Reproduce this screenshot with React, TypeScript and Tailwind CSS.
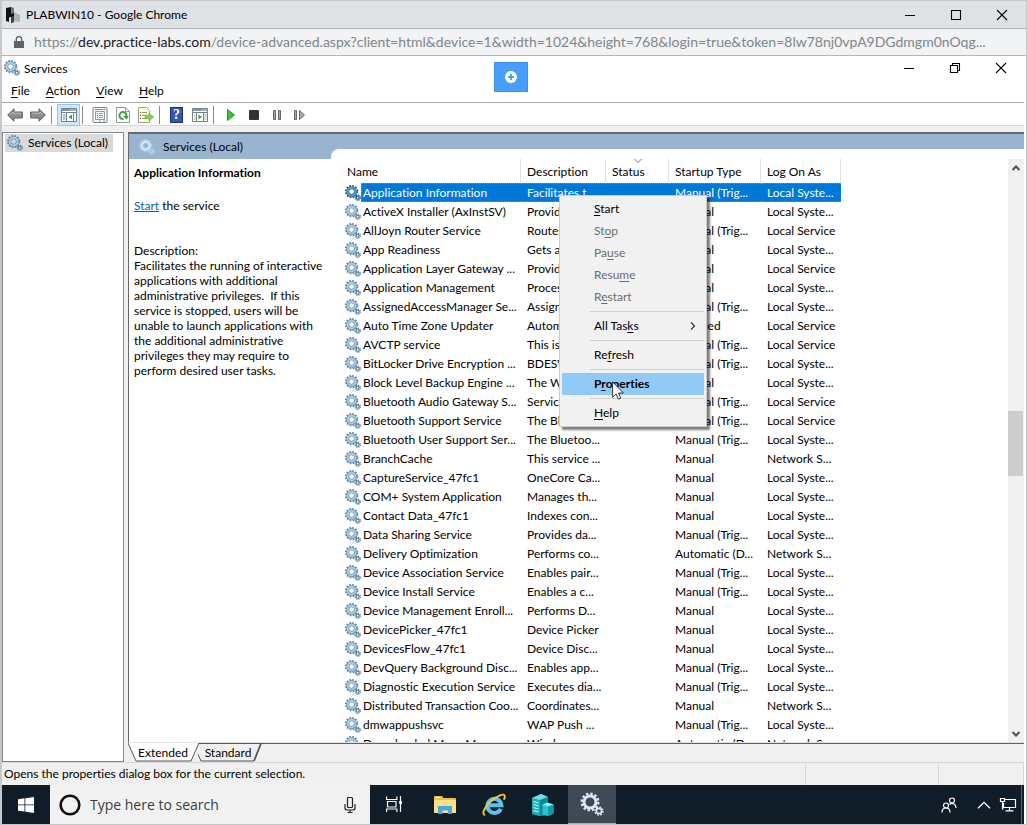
import React from "react";

type IconProps = { className?: string };

function Gears({ className = "", pale = false, strong = false }: IconProps & { pale?: boolean; strong?: boolean }) {
  const body = pale ? "#d3e6f3" : strong ? "#5f9cc8" : "#a9cbe3";
  const edge = pale ? "#b5d2e8" : strong ? "#1f5f96" : "#5f87a5";
  return (
    <svg viewBox="0 0 16 16" className={"h-4 w-4 shrink-0 " + className} aria-hidden="true">
      <circle cx="6.6" cy="6.6" r="5.800" fill="none" stroke={edge} strokeWidth="1.800" strokeDasharray="1.700 1.337" />
      <circle cx="6.6" cy="6.6" r="3.900" fill="none" stroke={edge} strokeWidth="3" />
      <circle cx="6.6" cy="6.6" r="3.900" fill="none" stroke={body} strokeWidth="2" />
      <circle cx="12.7" cy="12.7" r="2.600" fill="none" stroke={edge} strokeWidth="1.300" strokeDasharray="1.200 0.842" />
      <circle cx="12.7" cy="12.7" r="1.500" fill="none" stroke={edge} strokeWidth="1.300" />
    </svg>
  );
}

function Minimize() {
  return (
    <svg viewBox="0 0 12 12" className="h-3 w-3" stroke="#000" fill="none" aria-hidden="true">
      <path d="M1 6.500h10" />
    </svg>
  );
}

function Maximize() {
  return (
    <svg viewBox="0 0 12 12" className="h-3 w-3" stroke="#000" fill="none" aria-hidden="true">
      <path d="M1.500 1.500h9v9h-9z" strokeWidth="1.1" />
    </svg>
  );
}

function Restore() {
  return (
    <svg viewBox="0 0 12 12" className="h-3 w-3" stroke="#000" fill="none" aria-hidden="true">
      <path d="M1.500 3.500h7v7h-7zM3.500 3.500v-2h7v7h-2" strokeWidth="1.1" />
    </svg>
  );
}

function Close() {
  return (
    <svg viewBox="0 0 12 12" className="h-3 w-3" stroke="#000" fill="none" aria-hidden="true">
      <path d="M1 1l10 10M11 1L1 11" strokeWidth="1.1" />
    </svg>
  );
}

function WindowControls({ restore = false }: { restore?: boolean }) {
  const items: [string, React.ReactNode][] = [
    ["Minimize", <Minimize />],
    restore ? ["Restore", <Restore />] : ["Maximize", <Maximize />],
    ["Close", <Close />],
  ];
  return (
    <div className="flex">
      {items.map(([label, icon]) => (
        <button key={label} aria-label={label} className="flex h-6 w-[46px] items-center justify-center">
          {icon}
        </button>
      ))}
    </div>
  );
}

function ArrowIcon({ flip = false }: { flip?: boolean }) {
  return (
    <svg viewBox="0 0 16 14" className={flip ? "h-3.5 w-4 -scale-x-100" : "h-3.5 w-4"} aria-hidden="true">
      <path d="M0.700 7L7 .800v3.200h8.300v6H7v3.200z" fill="#8d8d8d" stroke="#5c5c5c" strokeLinejoin="round" />
      <path d="M2.800 6.800L6 3.800V5.200h8" stroke="#bdbdbd" fill="none" />
    </svg>
  );
}

function PaneIcon({ right = false }: { right?: boolean }) {
  return (
    <svg viewBox="0 0 16 14" className="h-3.5 w-4" aria-hidden="true">
      <path d="M.5.5h15v13H.5z" fill="#fff" stroke="#78828c" />
      <path d="M1 1h14v2H1z" fill="#8a949e" />
      <path d="M9.500 2h1M11.500 2h1M13.500 2h1" stroke="#fff" />
      <path d="M1 4.500h14" stroke="#78828c" />
      {right ? (
        <>
          <path d="M11.500 5v8M4.500 5v8" stroke="#78828c" />
          <path d="M6.500 6.500v5L10 9z" fill="#34a526" />
          <path d="M12.500 7h2M12.500 9h2M12.500 11h2M2 7h1.500M2 9h1.500M2 11h1.500" stroke="#8fa2b0" />
        </>
      ) : (
        <>
          <path d="M5.500 5v8M12.500 5v8" stroke="#78828c" />
          <path d="M11 6.500v5L7.500 9z" fill="#34a526" />
          <path d="M2 7h2.500M2 9h2.500M2 11h2.500" stroke="#5f8fb0" />
        </>
      )}
    </svg>
  );
}

function PropertiesIcon() {
  return (
    <svg viewBox="0 0 16 16" className="h-4 w-4" aria-hidden="true">
      <rect x="1" y=".5" width="14" height="15" rx="1" fill="#fdfdfd" stroke="#7d8287" />
      <path d="M3 2.500h8M12 2.500h1.500" stroke="#7d8287" />
      <path d="M3.500 4.500h9v8h-9z" fill="#f3f6f8" stroke="#8e989f" />
      <path d="M5 6.500h1M5 8.500h1M5 10.500h1" stroke="#4992c7" />
      <path d="M7 6.500h4M7 8.500h4M7 10.500h4" stroke="#9aa3aa" />
      <path d="M7 14h2M11 14h2" stroke="#8e989f" />
    </svg>
  );
}

function RefreshIcon() {
  return (
    <svg viewBox="0 0 14 16" className="h-4 w-3.5" aria-hidden="true">
      <path d="M.5.5h9l4 4v11H.5z" fill="#fdfdfd" stroke="#9b9b9b" />
      <path d="M9.500.5v4h4" fill="none" stroke="#9b9b9b" />
      <path d="M10.300 9.500A3.500 3.500 0 1 0 7.500 12" fill="none" stroke="#3fa544" strokeWidth="2" />
      <path d="M7.500 9h5.300L10.300 12.800z" fill="#2f9e33" />
    </svg>
  );
}

function ExportIcon() {
  return (
    <svg viewBox="0 0 16 16" className="h-4 w-4" aria-hidden="true">
      <path d="M.5.5h8l3 3v12H.5z" fill="#fffbe0" stroke="#a3a08c" />
      <path d="M4 5.500h5M4 8.500h3M4 11.500h5" stroke="#a19a77" />
      <path d="M2 5.500h1M2 8.500h1M2 11.500h1" stroke="#555" />
      <path d="M7 8.300h4V6l4.700 4L11 14v-2.300H7z" fill="#7fd44c" stroke="#4fa82c" strokeWidth=".5" />
    </svg>
  );
}

function HelpIcon() {
  return (
    <span className="flex h-4 w-[13px] items-center justify-center border border-[#1f3274] bg-[#3c55ad] font-['Liberation_Serif',serif] text-sm font-bold leading-none text-white">
      ?
    </span>
  );
}

function ToolButton({ label, active, children }: { label: string; active?: boolean; children: React.ReactNode }) {
  return (
    <button
      aria-label={label}
      className={
        active
          ? "flex h-[22px] w-[23px] items-center justify-center border border-[#92c8f0] bg-[#cce8ff]"
          : "flex h-[22px] w-[23px] items-center justify-center"
      }
    >
      {children}
    </button>
  );
}

function ToolSeparator() {
  return <span className="ml-0.5 mr-[5px] h-[18px] w-px bg-[#8c8c8c]" />;
}

type Service = [string, string, string, string];

const T = "Manual (Trig...";
const M = "Manual";
const SY = "Local Syste...";
const SE = "Local Service";
const NS = "Network S...";

const services: Service[] = [
  ["Application Information", "Facilitates t...", T, SY],
  ["ActiveX Installer (AxInstSV)", "Provides Us...", M, SY],
  ["AllJoyn Router Service", "Routes AllJo...", T, SE],
  ["App Readiness", "Gets apps re...", M, SY],
  ["Application Layer Gateway ...", "Provides sup...", M, SE],
  ["Application Management", "Processes in...", M, SY],
  ["AssignedAccessManager Se...", "AssignedAcc...", T, SY],
  ["Auto Time Zone Updater", "Automaticall...", "Disabled", SE],
  ["AVCTP service", "This is Audio...", T, SE],
  ["BitLocker Drive Encryption ...", "BDESVC hos...", T, SY],
  ["Block Level Backup Engine ...", "The WBENG...", M, SY],
  ["Bluetooth Audio Gateway S...", "Service supp...", T, SE],
  ["Bluetooth Support Service", "The Bluetoo...", T, SE],
  ["Bluetooth User Support Ser...", "The Bluetoo...", T, SY],
  ["BranchCache", "This service ...", M, NS],
  ["CaptureService_47fc1", "OneCore Ca...", M, SY],
  ["COM+ System Application", "Manages th...", M, SY],
  ["Contact Data_47fc1", "Indexes con...", M, SY],
  ["Data Sharing Service", "Provides da...", T, SY],
  ["Delivery Optimization", "Performs co...", "Automatic (D...", NS],
  ["Device Association Service", "Enables pair...", T, SY],
  ["Device Install Service", "Enables a c...", T, SY],
  ["Device Management Enroll...", "Performs D...", M, SY],
  ["DevicePicker_47fc1", "Device Picker", M, SY],
  ["DevicesFlow_47fc1", "Device Disc...", M, SY],
  ["DevQuery Background Disc...", "Enables app...", T, SY],
  ["Diagnostic Execution Service", "Executes dia...", T, SY],
  ["Distributed Transaction Coo...", "Coordinates...", M, NS],
  ["dmwappushsvc", "WAP Push ...", T, SY],
  ["Downloaded Maps Man...", "Windows s...", "Automatic (D...", NS],
];

const headers = ["Name", "Description", "Status", "Startup Type", "Log On As"];

function ServiceTable() {
  return (
    <table className="w-[500px] table-fixed border-separate border-spacing-0 text-left leading-[19px]">
      <colgroup>
        <col className="w-[180px]" />
        <col className="w-[85px]" />
        <col className="w-[63px]" />
        <col className="w-[92px]" />
        <col className="w-20" />
      </colgroup>
      <thead>
        <tr className="h-6">
          {headers.map((h) => (
            <th key={h} className="relative whitespace-nowrap border-r border-[#e2e2e2] p-0 pl-1.5 font-normal">
              {h}
              {h === "Status" && (
                <svg viewBox="0 0 8 4" className="absolute left-7 top-0 h-1 w-2" fill="none" stroke="#777" aria-hidden="true">
                  <path d="M.5 0L4 3.500 7.500 0" />
                </svg>
              )}
            </th>
          ))}
        </tr>
      </thead>
      <tbody>
        {services.map(([name, desc, startup, logon], i) => {
          const sel = i === 0;
          const cell = sel
            ? "overflow-hidden whitespace-nowrap border-y border-dotted border-[#c9803a] bg-[#0078d7] p-0 pl-1.5 leading-[17px] text-white"
            : "overflow-hidden whitespace-nowrap p-0 pl-1.5";
          return (
            <tr key={name} className="h-[19px]" aria-selected={sel}>
              <td className="p-0 pl-1">
                <div className="flex h-[19px] items-center">
                  <Gears strong={sel} />
                  <span
                    className={
                      sel
                        ? "h-[19px] flex-1 whitespace-nowrap border-y border-l border-dotted border-[#c9803a] bg-[#0078d7] pl-px leading-[17px] text-white"
                        : "whitespace-nowrap pl-0.5"
                    }
                  >
                    {name}
                  </span>
                </div>
              </td>
              <td className={cell}>{desc}</td>
              <td className={cell} />
              <td className={cell}>{startup}</td>
              <td className={cell}>{logon}</td>
            </tr>
          );
        })}
      </tbody>
    </table>
  );
}

function MenuItem({
  before = "",
  hot,
  after = "",
  disabled,
  active,
  submenu,
}: {
  before?: string;
  hot: string;
  after?: string;
  disabled?: boolean;
  active?: boolean;
  submenu?: boolean;
}) {
  const base = "flex h-[22px] w-full items-center pl-8 pr-2 text-left ";
  const tone = active ? "bg-[#91c9f7] font-bold text-black" : disabled ? "text-[#6d6d6d]" : "text-black";
  return (
    <button role="menuitem" disabled={disabled} className={base + tone}>
      <span className="flex-1">
        {before}
        <u className="underline-offset-2">{hot}</u>
        {after}
      </span>
      {submenu && (
        <svg viewBox="0 0 6 8" className="h-2 w-1.5" fill="none" stroke="#333" strokeWidth="1.2" aria-hidden="true">
          <path d="M1 .5L4.500 4 1 7.500" />
        </svg>
      )}
    </button>
  );
}

function MenuRule() {
  return <div className="my-[3px] ml-7 h-px bg-[#cfcfcf]" />;
}

function ContextMenu() {
  return (
    <div
      role="menu"
      className="absolute left-[228px] top-[46px] w-[148px] border border-[#cccccc] bg-[#f1f1f1] p-0.5 shadow-[3px_3px_2px_rgba(0,0,0,0.5)]"
    >
      <MenuItem hot="S" after="tart" />
      <MenuItem before="St" hot="o" after="p" disabled />
      <MenuItem before="Pa" hot="u" after="se" disabled />
      <MenuItem before="Resu" hot="m" after="e" disabled />
      <MenuItem before="R" hot="e" after="start" disabled />
      <MenuRule />
      <MenuItem before="All Tas" hot="k" after="s" submenu />
      <MenuRule />
      <MenuItem before="Re" hot="f" after="resh" />
      <MenuRule />
      <MenuItem before="P" hot="r" after="operties" active />
      <MenuRule />
      <MenuItem hot="H" after="elp" />
      <svg viewBox="0 0 12 19" className="absolute left-[52px] top-[185px] h-[19px] w-3" aria-hidden="true">
        <path d="M.6.9v15.300l3.500-3.300 2.300 5.300 2.300-1-2.200-5.200h4.900z" fill="#fff" stroke="#222" strokeWidth=".9" />
      </svg>
    </div>
  );
}

function ScrollBar() {
  return (
    <div className="flex w-4 shrink-0 flex-col bg-[#f0f0f0]">
      <button aria-label="Scroll up" className="flex h-[17px] items-center justify-center">
        <svg viewBox="0 0 10 8" className="h-2 w-2.5" fill="none" stroke="#505050" strokeWidth="2" aria-hidden="true">
          <path d="M1.500 6L5 2.500 8.500 6" />
        </svg>
      </button>
      <div className="flex flex-1 flex-col">
        <div className="grow-[235]" />
        <div className="mr-px h-[65px] bg-[#cdcdcd]" />
        <div className="grow-[248]" />
      </div>
      <button aria-label="Scroll down" className="flex h-[17px] items-center justify-center">
        <svg viewBox="0 0 10 8" className="h-2 w-2.5" fill="none" stroke="#505050" strokeWidth="2" aria-hidden="true">
          <path d="M1.500 2L5 5.500 8.500 2" />
        </svg>
      </button>
    </div>
  );
}

function ViewTabs() {
  return (
    <div className="flex h-[19px] shrink-0">
      <button className="relative w-[70px] text-center">
        <svg viewBox="0 0 72 19" className="absolute left-0 top-0 h-[19px] w-[72px]" aria-hidden="true">
          <path d="M0 0H71L63 18H8z" fill="#fff" />
          <path d="M0 0L8 18H63L71 0" fill="none" stroke="#555" />
        </svg>
        <span className="relative">Extended</span>
      </button>
      <button className="relative w-16 pr-1 text-center">
        <svg viewBox="0 0 66 19" className="absolute left-0 top-0 h-[19px] w-[66px]" fill="none" stroke="#555" aria-hidden="true">
          <path d="M1 .5H64M-2 7L3 18H56" />
          <path d="M56 18L63 .500" strokeWidth="1.800" />
        </svg>
        <span className="relative">Standard</span>
      </button>
      <div className="flex-1 border-t border-[#606060]" />
    </div>
  );
}

function Taskbar() {
  const app = "flex w-12 items-center justify-center";
  return (
    <div className="flex h-[39px] shrink-0 bg-[#101c28]">
      <button aria-label="Start" className="flex w-12 items-center justify-center">
        <svg viewBox="0 0 16 16" className="h-4 w-4" fill="#fff" aria-hidden="true">
          <path d="M0 2.200L6.500 1.300V7.500H0zM7.300 1.200L16 0v7.500H7.300zM0 8.300h6.500v6.300L0 13.700zM7.300 8.300H16V16l-8.700-1.200z" />
        </svg>
      </button>
      <label className="flex w-80 items-center bg-[#f2f2f2] pl-2 pr-3">
        <svg viewBox="0 0 24 24" className="h-6 w-6" aria-hidden="true">
          <circle cx="12" cy="12" r="9.300" fill="none" stroke="#111" strokeWidth="2.600" />
        </svg>
        <input
          aria-label="Search"
          placeholder="Type here to search"
          className="ml-2 w-0 flex-1 bg-transparent font-['Open_Sans',sans-serif] text-sm outline-none placeholder:text-[#3c3c3c]"
        />
        <svg viewBox="0 0 16 18" className="h-[18px] w-4" fill="none" stroke="#222" strokeWidth="1.200" aria-hidden="true">
          <path d="M5.500 2.500a1 1 0 0 1 1-1h3a1 1 0 0 1 1 1v8a1 1 0 0 1-1 1h-3a1 1 0 0 1-1-1zM3 8v4a2 2 0 0 0 2 2h6a2 2 0 0 0 2-2V8M8 14v2.500M5.500 16.500h5" />
        </svg>
      </label>
      <div className="flex gap-px">
        <button aria-label="Task View" className="flex w-[50px] items-center justify-center pr-0.5">
          <svg viewBox="0 0 17 17" className="h-[17px] w-[17px]" fill="none" stroke="#f5f5f5" strokeWidth="1.200" aria-hidden="true">
            <path d="M.6.5v3h10.300v-3M.6 16v-3h10.300v3M1.500 5.500h8.500v5.500H1.500zM14.500 0v16" />
            <path d="M13.200 6.500h2.800" strokeWidth="3" />
          </svg>
        </button>
        <button aria-label="File Explorer" className={app}>
          <svg viewBox="0 0 22 19" className="h-[19px] w-[22px]" aria-hidden="true">
            <path d="M0 1h8l1.500 2H21a1 1 0 0 1 1 1v14H0z" fill="#eebb4e" />
            <path d="M0 5h22v13H0z" fill="#fbdf8b" />
            <path d="M2 2.500h4" stroke="#fff" />
            <path d="M4 19v-8h14v8h-4v-3.500H8.500V19z" fill="#45acd3" />
          </svg>
        </button>
        <button aria-label="Internet Explorer" className={app}>
          <svg viewBox="0 0 24 24" className="h-6 w-6" aria-hidden="true">
            <path d="M18.800 15.800A7 7 0 1 1 19.400 12.300H6.500" fill="none" stroke="#59c2ee" strokeWidth="4" />
            <path d="M3.200 21.800C-1 22 2.200 13.800 9.500 7.800 15 3 22.500-.5 22.800 3c.1 1-.3 2.400-1 3.700" fill="none" stroke="#f3c53a" strokeWidth="1.900" />
          </svg>
        </button>
        <button aria-label="Server Manager" className={app}>
          <svg viewBox="0 0 22 22" className="h-[22px] w-[22px]" aria-hidden="true">
            <path d="M0 4l9-4 7 3v18L7 22l-7-2z" fill="#19aebb" />
            <path d="M0 4l9-4 7 3-8 3z" fill="#6de2e4" />
            <path d="M8 6l8-3v18l-8 1z" fill="#0b8998" />
            <path d="M1.500 7.500L6.500 9M1.500 10.500L6.500 12M1.500 13.500L6.500 15M1.500 16.500L6.500 18" stroke="#bff6f3" strokeWidth="1.300" />
            <path d="M10.500 10.500l5-2 6 2v9L16 22l-5.500-1.500z" fill="#27c3cf" />
            <path d="M10.500 10.500l5-2 6 2-5.500 2z" fill="#8ceeed" />
            <path d="M16 12.500l5.500-2v9L16 22z" fill="#109daa" />
          </svg>
        </button>
        <button aria-label="Services" className="flex w-12 items-center justify-center border-b border-[#8ab8dc] bg-[#3f4955]">
          <svg viewBox="0 0 24 24" className="h-6 w-6" fill="none" aria-hidden="true">
            <circle cx="10" cy="10" r="8.300" stroke="#dbe6f2" strokeWidth="2.400" strokeDasharray="2.400 1.950" />
            <circle cx="10" cy="10" r="6" stroke="#dbe6f2" strokeWidth="3" />
            <circle cx="19" cy="19" r="4" stroke="#dbe6f2" strokeWidth="1.500" strokeDasharray="1.700 1.440" />
            <circle cx="19" cy="19" r="2.600" stroke="#dbe6f2" strokeWidth="1.600" />
          </svg>
        </button>
      </div>
      <div className="ml-auto flex items-center">
        <button aria-label="People" className="mr-5">
          <svg viewBox="0 0 16 16" className="h-4 w-4" fill="none" stroke="#fff" strokeWidth="1.200" aria-hidden="true">
            <circle cx="5" cy="8.500" r="2.500" />
            <path d="M1 15.500c0-6 8-6 8 0" />
            <circle cx="11" cy="3.500" r="2.500" />
            <path d="M8.500 7.500c2.500-2.500 6.500-.5 6.500 3.500" />
          </svg>
        </button>
        <button aria-label="Show hidden icons" className="mr-2">
          <svg viewBox="0 0 14 8" className="h-2 w-3.5" fill="none" stroke="#fff" strokeWidth="1.300" aria-hidden="true">
            <path d="M1 7.300L7 1.300l6 6" />
          </svg>
        </button>
        <button aria-label="Network" className="mr-1">
          <svg viewBox="0 0 18 16" className="h-4 w-[18px]" fill="none" stroke="#fff" strokeWidth="1.200" aria-hidden="true">
            <path d="M6 2.500h10.500v8H4.500V6M10.500 10.500v3M6.500 13.800h8M1.500 1.500h4v3h-4zM3.500 4.500V12h1" />
          </svg>
        </button>
        <span className="mr-0.5 h-[39px] w-px bg-[#59636d]" />
      </div>
    </div>
  );
}

export default function App() {
  return (
    <div className="flex h-screen flex-col overflow-hidden border-y border-l-2 border-r border-[#c6c8ca] bg-white pr-0.5 font-['Lato',sans-serif] text-xs text-black [font-variant-ligatures:none]">
      <header className="-mr-0.5 flex h-7 shrink-0 items-center border-b border-[#b4b6b9] bg-[#dee1e6] pl-1 pr-px">
        <svg viewBox="0 0 14 16" className="h-4 w-3.5" aria-hidden="true">
          <path d="M0 1l5-1v6l3-1v10l-3 1v-6l-2 .5V15l-3-1z" fill="#111" />
          <path d="M5 0l3 1v5l-3 1z" fill="#777" />
          <path d="M8 5l6 3v7l-6-1z" fill="#b3b3b3" />
          <path d="M5 10l3-1v6l-3 1z" fill="#444" />
        </svg>
        <h1 className="ml-1.5 flex-1">PLABWIN10 - Google Chrome</h1>
        <WindowControls />
      </header>
      <div className="-mr-0.5 flex h-[27px] shrink-0 items-center border-b border-[#b4b6b9] bg-[#f1f3f4] pl-3">
        <svg viewBox="0 0 10 12" className="h-3 w-2.5 shrink-0" aria-hidden="true">
          <path d="M0 5h10v7H0z" fill="#5f6368" />
          <path d="M2.300 5V3.300a2.700 2.700 0 0 1 5.400 0V5" fill="none" stroke="#5f6368" strokeWidth="1.400" />
        </svg>
        <p className="ml-2.5 whitespace-nowrap text-sm text-[#80868b]">
          https://<span className="text-[#202124]">dev.practice-labs.com</span>
          /device-advanced.aspx?client=html&amp;device=1&amp;width=1024&amp;height=768&amp;login=true&amp;token=8lw78nj0vpA9DGdmgm0nOqg...
        </p>
      </div>

      <div className="relative flex h-6 shrink-0 items-center pl-0.5">
        <Gears />
        <h2 className="ml-1 flex-1 pt-0.5">Services</h2>
        <WindowControls restore />
        <button
          aria-label="Expand toolbar"
          className="absolute left-1/2 top-1.5 -ml-[19px] flex h-[30px] w-[34px] items-center justify-center border border-[#3a90ea] bg-[#479ffb]"
        >
          <svg viewBox="0 0 12 12" className="h-3 w-3" aria-hidden="true">
            <circle cx="6" cy="6" r="6" fill="#fff" />
            <path d="M6 3v6M3 6h6" stroke="#479ffb" strokeWidth="1.800" />
          </svg>
        </button>
      </div>
      <nav className="flex h-[23px] shrink-0 items-center gap-4 border-b border-[#a9a9a9] pl-[9px]">
        {["File", "Action", "View", "Help"].map((m) => (
          <button key={m}>
            <u className="underline-offset-2">{m[0]}</u>
            {m.slice(1)}
          </button>
        ))}
      </nav>
      <div className="flex h-[23px] shrink-0 items-center border-b border-[#d9d9d9] pl-px pt-px">
        <ToolButton label="Back"><ArrowIcon /></ToolButton>
        <ToolButton label="Forward"><ArrowIcon flip /></ToolButton>
        <ToolSeparator />
        <ToolButton label="Show console tree" active><PaneIcon /></ToolButton>
        <ToolSeparator />
        <ToolButton label="Properties"><PropertiesIcon /></ToolButton>
        <ToolButton label="Refresh"><RefreshIcon /></ToolButton>
        <ToolButton label="Export list"><ExportIcon /></ToolButton>
        <ToolSeparator />
        <ToolButton label="Help topics"><HelpIcon /></ToolButton>
        <ToolButton label="Show action pane"><PaneIcon right /></ToolButton>
        <ToolSeparator />
        <ToolButton label="Start service">
          <svg viewBox="0 0 8 12" className="h-3 w-2" aria-hidden="true">
            <path d="M.5.5v11L7.500 6z" fill="#35c435" stroke="#1e9a28" />
          </svg>
        </ToolButton>
        <ToolButton label="Stop service">
          <svg viewBox="0 0 10 10" className="h-2.5 w-2.5" aria-hidden="true">
            <rect width="10" height="10" rx="1" fill="#333" />
          </svg>
        </ToolButton>
        <ToolButton label="Pause service">
          <svg viewBox="0 0 8 10" className="h-2.5 w-2" fill="#aaa" stroke="#666" aria-hidden="true">
            <path d="M.5.500h2v9h-2zM5.500.500h2v9h-2z" />
          </svg>
        </ToolButton>
        <ToolButton label="Restart service">
          <svg viewBox="0 0 12 10" className="h-2.5 w-3" fill="#aaa" stroke="#666" aria-hidden="true">
            <path d="M.5.500h2v9h-2zM5.500.500v9l5-4.500z" />
          </svg>
        </ToolButton>
      </div>

      <div className="flex min-h-0 flex-1 gap-1 bg-[#f0f0f0] pt-1.5">
        <aside className="w-[122px] shrink-0 border border-[#828790] bg-white px-0.5 py-px">
          <button className="flex h-[18px] w-[108px] items-center gap-[5px] bg-[#d9d9d9] pl-0.5">
            <Gears />
            <span className="whitespace-nowrap">Services (Local)</span>
          </button>
        </aside>
        <main className="flex min-w-0 flex-1 flex-col">
          <section className="flex min-h-0 flex-1 border-b border-l border-t-2 border-b-[#e3e3e3] border-l-[#696969] border-t-[#696969] bg-white">
            <div className="w-[202px] shrink-0">
              <div className="flex h-[25px] items-center gap-2 bg-[#99b4d1] pl-2.5">
                <Gears pale />
                <span>Services (Local)</span>
              </div>
              <div className="px-[5px] leading-[15px]">
                <h3 className="mt-1.5 font-bold">Application Information</h3>
                <p className="mt-[18px]">
                  <a href="#start" className="text-[#0066aa] underline">Start</a> the service
                </p>
                <p className="mt-[30px]">Description:</p>
                <p className="whitespace-pre-line">
                  {"Facilitates the running of interactive\napplications with additional\nadministrative privileges.\u00a0 If this\nservice is stopped, users will be\nunable to launch applications with\nthe additional administrative\nprivileges they may require to\nperform desired user tasks."}
                </p>
              </div>
            </div>
            <div className="flex min-w-0 flex-1 bg-[#99b4d1] pt-[15px]">
              <div className="relative flex min-w-0 flex-1 rounded-tl-lg bg-white pl-2.5 pt-2.5">
                <div className="min-w-0 flex-1 overflow-hidden">
                  <ServiceTable />
                </div>
                <ScrollBar />
                <ContextMenu />
              </div>
            </div>
          </section>
          <ViewTabs />
        </main>
      </div>

      <footer className="flex h-[23px] shrink-0 items-stretch border-t border-[#d7d7d7] bg-[#f0f0f0] pl-0.5">
        <p className="flex-1 self-center">Opens the properties dialog box for the current selection.</p>
        <span className="w-[133px] border-l border-[#d7d7d7]" />
        <span className="w-[86px] border-x border-[#d7d7d7]" />
      </footer>
      <Taskbar />
    </div>
  );
}
